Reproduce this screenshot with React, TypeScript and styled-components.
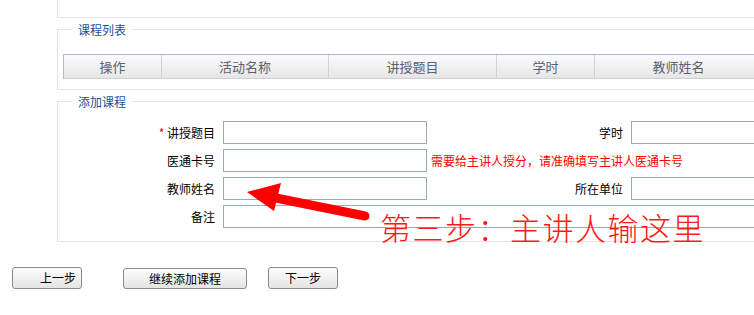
import styled, { createGlobalStyle } from "styled-components";

const GlobalStyle = createGlobalStyle`
  html, body {
    margin: 0;
    padding: 0;
    background: #ffffff;
    overflow: hidden;
  }
  body {
    font-family: "Noto Sans CJK SC", "Noto Sans", sans-serif;
    font-size: 12px;
    color: #000;
  }
`;

const columns = [
  { title: "操作", width: 98 },
  { title: "活动名称", width: 167 },
  { title: "讲授题目", width: 168 },
  { title: "学时", width: 98 },
  { title: "教师姓名", width: 168 },
  { title: "", width: 120 },
];

export default function App() {
  return (
    <>
      <GlobalStyle />
      <Page>
        <Panels>
          <TopBox />

          <Box>
            <Legend>课程列表</Legend>
            <HeaderRow>
              {columns.map((c, i) => (
                <HeaderCell key={i} $width={c.width}>
                  {c.title}
                </HeaderCell>
              ))}
            </HeaderRow>
          </Box>

          <FormBox>
            <Legend>添加课程</Legend>
            <FormGrid>
              <Label>
                <Star>*</Star> 讲授题目
              </Label>
              <Input />
              <SideLabel>学时</SideLabel>
              <Input />

              <Label>医通卡号</Label>
              <Input />
              <Note>需要给主讲人授分，请准确填写主讲人医通卡号</Note>

              <Label>教师姓名</Label>
              <Input />
              <SideLabel>所在单位</SideLabel>
              <Input />

              <Label>备注</Label>
              <WideInput />
            </FormGrid>
          </FormBox>
        </Panels>

        <ButtonRow>
          <Button $width={70} $indent={22}>上一步</Button>
          <Button $width={124} $offset={41} $height={21}>继续添加课程</Button>
          <Button $width={70} $offset={21}>下一步</Button>
        </ButtonRow>

        <Arrow width="754" height="315" viewBox="0 0 754 315">
          <line
            x1="276"
            y1="198"
            x2="365"
            y2="216"
            stroke="#ff0000"
            strokeWidth="9"
            strokeLinecap="round"
          />
          <polygon points="247,192 281,183 274,211" fill="#ff0000" />
        </Arrow>
        <StepText>第三步：主讲人输这里</StepText>
      </Page>
    </>
  );
}

const Page = styled.div`
  position: relative;
  width: 754px;
  height: 315px;
  overflow: hidden;
`;

const Panels = styled.div`
  padding-left: 57px;
  display: flex;
  flex-direction: column;
`;

const TopBox = styled.div`
  width: 760px;
  height: 18px;
  border: 1px solid #e3e3e3;
  border-top: none;
  box-sizing: border-box;
`;

const Box = styled.fieldset`
  width: 760px;
  box-sizing: border-box;
  margin: 3px 0 0;
  padding: 16px 0 10px 0;
  border: 1px solid #e3e3e3;
  min-width: 0;
`;

const FormBox = styled(Box)`
  margin-top: 3px;
  padding: 11px 0 13px 0;
`;

const Legend = styled.legend`
  margin-left: 14px;
  padding: 0 6px;
  color: #22509e;
  font-size: 12px;
  line-height: 17px;
`;

const HeaderRow = styled.div`
  display: flex;
  height: 25px;
  margin-left: 5px;
  border-top: 1px solid #a9bcd8;
  border-left: 1px solid #a9bcd8;
  border-bottom: 1px solid #cfcfcf;
  box-sizing: border-box;
  background: linear-gradient(#fbfbfb, #e6e6e6);
`;

const HeaderCell = styled.div<{ $width: number }>`
  flex: 0 0 ${(p) => p.$width}px;
  box-sizing: border-box;
  border-right: 1px solid #d2d2d2;
  display: flex;
  align-items: center;
  justify-content: center;
  color: #5c6070;
  font-size: 13px;
`;

const FormGrid = styled.div`
  display: grid;
  grid-template-columns: 157px 204px 188px 200px;
  grid-auto-rows: 23px;
  column-gap: 8px;
  row-gap: 5px;
  align-items: center;
`;

const Label = styled.div`
  text-align: right;
  font-size: 12px;
  line-height: 23px;
`;

const SideLabel = styled(Label)``;

const Star = styled.span`
  color: #ff0000;
`;

const Input = styled.input`
  box-sizing: border-box;
  width: 100%;
  height: 23px;
  margin: 0;
  border: 1px solid #94adb8;
  background: #fff;
  outline: none;
`;

const WideInput = styled(Input)`
  grid-column: 2 / 5;
`;

const Note = styled.div`
  grid-column: 3 / 5;
  margin-left: -4px;
  color: #ff0000;
  font-size: 12px;
  white-space: nowrap;
`;

const ButtonRow = styled.div`
  display: flex;
  align-items: flex-start;
  padding: 24px 0 0 12px;
`;

const Button = styled.button<{
  $width: number;
  $offset?: number;
  $indent?: number;
  $height?: number;
}>`
  width: ${(p) => p.$width}px;
  height: ${(p) => p.$height ?? 22}px;
  margin: ${(p) => (p.$height ? 2 : 1)}px 0 0 ${(p) => p.$offset ?? 0}px;
  padding: 0 0 0 ${(p) => p.$indent ?? 0}px;
  box-sizing: border-box;
  border: 1px solid #8a8a8a;
  border-radius: 3px;
  background: linear-gradient(#fdfdfd, #e4e4e4);
  font-family: "Noto Sans CJK SC", sans-serif;
  font-size: 12px;
  color: #000;
  line-height: 20px;
`;

const Arrow = styled.svg`
  position: absolute;
  left: 0;
  top: 0;
  pointer-events: none;
`;

const StepText = styled.div`
  position: absolute;
  left: 380px;
  top: 207px;
  color: #ff1a1a;
  font-family: "Noto Sans CJK SC", serif;
  font-weight: 300;
  font-size: 31px;
  line-height: 40px;
  letter-spacing: 1.5px;
  white-space: nowrap;
`;
